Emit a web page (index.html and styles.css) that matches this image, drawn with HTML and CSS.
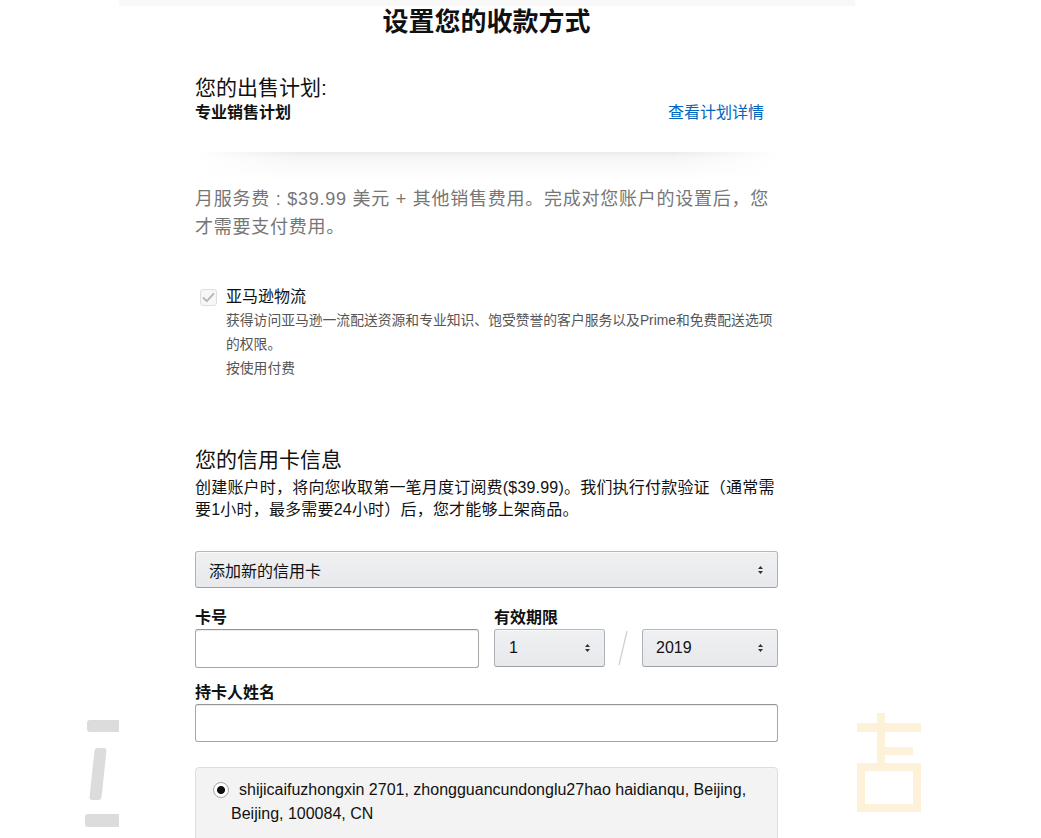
FILE: index.html
```html
<!DOCTYPE html>
<html lang="zh-CN">
<head>
<meta charset="utf-8">
<title>设置您的收款方式</title>
<link rel="stylesheet" href="styles.css">
</head>
<body>
<div class="wm wm-left" aria-hidden="true">
  <span class="wl-top"></span>
  <span class="wl-slant"></span>
  <span class="wl-bottom"></span>
</div>
<div class="wm wm-right" aria-hidden="true">
  <span class="wr-vert"></span>
  <span class="wr-top"></span>
  <span class="wr-mid"></span>
  <span class="wr-box"></span>
</div>
<div class="page">
  <div class="topbar"></div>
  <main class="content">
    <h1 class="title">设置您的收款方式</h1>

    <section class="plan">
      <h2 class="section-title">您的出售计划:</h2>
      <div class="plan-row">
        <span class="plan-name">专业销售计划</span>
        <a class="plan-link" href="#">查看计划详情</a>
      </div>
    </section>

    <div class="divider"></div>

    <p class="fee">月服务费 : $39.99 美元 + 其他销售费用。完成对您账户的设置后，您才需要支付费用。</p>

    <div class="fba">
      <div class="fba-row">
        <span class="checkbox">
          <svg width="13" height="11" viewBox="0 0 13 11"><path d="M1.5 6 L4.8 9.2 L11.5 1.8" fill="none" stroke="#b5b5b5" stroke-width="1.8" stroke-linecap="round" stroke-linejoin="round"/></svg>
        </span>
        <span class="fba-label">亚马逊物流</span>
      </div>
      <p class="fba-desc">获得访问亚马逊一流配送资源和专业知识、饱受赞誉的客户服务以及Prime和免费配送选项的权限。</p>
      <p class="fba-desc">按使用付费</p>
    </div>

    <section class="card">
      <h2 class="section-title">您的信用卡信息</h2>
      <p class="card-desc">创建账户时，将向您收取第一笔月度订阅费($39.99)。我们执行付款验证（通常需要1小时，最多需要24小时）后，您才能够上架商品。</p>

      <div class="select select-full">
        <span>添加新的信用卡</span>
        <svg class="arrows" width="7" height="10" viewBox="0 0 7 10"><path d="M3.5 1 L6 4 L1 4 Z M3.5 9 L6 6 L1 6 Z" fill="#333"/></svg>
      </div>

      <div class="field-row">
        <div class="field field-number">
          <div class="label">卡号</div>
          <div class="input"></div>
        </div>
        <div class="field field-exp">
          <div class="label">有效期限</div>
          <div class="exp-row">
            <div class="select select-month">
              <span>1</span>
              <svg class="arrows" width="7" height="10" viewBox="0 0 7 10"><path d="M3.5 1 L6 4 L1 4 Z M3.5 9 L6 6 L1 6 Z" fill="#333"/></svg>
            </div>
            <svg class="slash" width="37" height="38" viewBox="0 0 37 38"><line x1="22" y1="2" x2="14" y2="36" stroke="#cfcfcf" stroke-width="1.2"/></svg>
            <div class="select select-year">
              <span>2019</span>
              <svg class="arrows" width="7" height="10" viewBox="0 0 7 10"><path d="M3.5 1 L6 4 L1 4 Z M3.5 9 L6 6 L1 6 Z" fill="#333"/></svg>
            </div>
          </div>
        </div>
      </div>

      <div class="field field-name">
        <div class="label">持卡人姓名</div>
        <div class="input"></div>
      </div>

      <div class="address">
        <span class="radio"></span>shijicaifuzhongxin 2701, zhongguancundonglu27hao haidianqu, Beijing, Beijing, 100084, CN
      </div>
    </section>
  </main>
</div>
</body>
</html>
```

FILE: styles.css
```css
html, body {
  margin: 0;
  padding: 0;
  background: #ffffff;
}

body {
  font-family: "Liberation Sans", "Noto Sans CJK SC", Arial, sans-serif;
  color: #111111;
  height: 838px;
  overflow: hidden;
  position: relative;
}

/* watermark remnants behind the page */
.wm {
  position: absolute;
  z-index: 0;
}
.wm span {
  position: absolute;
  display: block;
}
.wm-left span {
  background: #dcdcdc;
  border-radius: 3px;
}
.wm-left .wl-top {
  left: 87px;
  top: 720px;
  width: 40px;
  height: 12px;
}
.wm-left .wl-slant {
  left: 92px;
  top: 748px;
  width: 12px;
  height: 52px;
  transform: skewX(-6deg);
}
.wm-left .wl-bottom {
  left: 85px;
  top: 814px;
  width: 42px;
  height: 13px;
}
.wm-right span {
  background: #fdf1d9;
}
.wm-right .wr-vert {
  left: 877px;
  top: 713px;
  width: 8px;
  height: 52px;
}
.wm-right .wr-top {
  left: 857px;
  top: 723px;
  width: 64px;
  height: 9px;
}
.wm-right .wr-mid {
  left: 885px;
  top: 747px;
  width: 28px;
  height: 8px;
}
.wm-right .wr-box {
  left: 857px;
  top: 763px;
  width: 48px;
  height: 33px;
  background: transparent;
  border: 8px solid #fdf1d9;
}

/* page panel */
.page {
  position: relative;
  z-index: 1;
  width: 736px;
  margin-left: 119px;
  background: #ffffff;
  min-height: 838px;
}

.topbar {
  height: 6px;
  background: #f8f8f8;
}

.content {
  padding: 0 77px 0 76px;
}

.title {
  margin: 0;
  font-size: 26px;
  line-height: 32px;
  font-weight: 700;
  text-align: center;
  color: #111111;
}

.section-title {
  margin: 0;
  font-size: 21px;
  line-height: 26px;
  font-weight: 400;
  color: #111111;
}

.plan {
  margin-top: 37px;
}

.plan-row {
  display: flex;
  justify-content: space-between;
  align-items: center;
  height: 24px;
}

.plan-name {
  font-size: 16px;
  font-weight: 700;
  line-height: 24px;
}

.plan-link {
  font-size: 16px;
  line-height: 24px;
  color: #0066c0;
  text-decoration: none;
  margin-right: 14px;
}

.divider {
  margin-top: 27px;
  height: 28px;
  background: linear-gradient(to bottom, #ebebeb 0px, #f6f6f6 6px, rgba(255,255,255,0) 28px);
  -webkit-mask-image: linear-gradient(to right, transparent 0%, #000 18%, #000 82%, transparent 100%);
  mask-image: linear-gradient(to right, transparent 0%, #000 18%, #000 82%, transparent 100%);
}

.fee {
  margin: 5px 0 0 0;
  font-size: 18px;
  line-height: 28px;
  letter-spacing: 0.75px;
  color: #767676;
}

.fba {
  margin-top: 44px;
}

.fba-row {
  display: flex;
  align-items: center;
  height: 24px;
}

.checkbox {
  box-sizing: border-box;
  width: 17px;
  height: 17px;
  margin-left: 5px;
  margin-right: 9px;
  border: 1px solid #dedede;
  border-radius: 3px;
  background: #f7f7f7;
  display: flex;
  align-items: center;
  justify-content: center;
}

.fba-label {
  font-size: 16px;
  line-height: 24px;
  color: #111111;
}

.fba-desc {
  margin: 0 0 0 31px;
  font-size: 13.8px;
  line-height: 24px;
  color: #555555;
}

.card {
  margin-top: 66px;
}

.card-desc {
  margin: 4px 0 0 0;
  font-size: 16px;
  line-height: 22px;
  letter-spacing: 0.2px;
  color: #111111;
}

.select {
  box-sizing: border-box;
  display: flex;
  align-items: center;
  justify-content: space-between;
  background: linear-gradient(to bottom, #eff0f2, #e7e9ec);
  border: 1px solid #adb1b8;
  border-top-color: #b4b7bd;
  border-bottom-color: #9da1a7;
  border-radius: 3px;
  box-shadow: 0 1px 0 rgba(255,255,255,.6) inset;
  font-size: 16px;
  color: #111111;
}

.select-full {
  margin-top: 30px;
  height: 37px;
  padding: 0 13px 0 13px;
}

.arrows {
  display: block;
  flex: none;
}

.field-row {
  display: flex;
  gap: 15px;
  margin-top: 19px;
}

.label {
  font-size: 16px;
  font-weight: 700;
  line-height: 22px;
  color: #111111;
}

.input {
  box-sizing: border-box;
  border: 1px solid #a6a6a6;
  border-top-color: #949494;
  border-radius: 3px;
  background: #ffffff;
  box-shadow: 0 1px 0 rgba(255,255,255,.5), 0 1px 0 rgba(0,0,0,.07) inset;
}

.field-number {
  width: 284px;
}
.field-number .input {
  height: 39px;
}

.field-exp {
  width: 284px;
}

.exp-row {
  display: flex;
  align-items: center;
}

.select-month {
  width: 111px;
  height: 38px;
  padding: 0 13px 0 14px;
}

.slash {
  display: block;
  flex: none;
}

.select-year {
  width: 136px;
  height: 38px;
  padding: 0 13px 0 13px;
}

.field-name {
  margin-top: 14px;
}
.field-name .input {
  height: 38px;
}

.address {
  box-sizing: border-box;
  margin-top: 25px;
  padding: 10px 20px 20px 35px;
  background: #f3f3f3;
  border: 1px solid #dddddd;
  border-radius: 4px;
  font-size: 16px;
  line-height: 24px;
  color: #111111;
}

.radio {
  box-sizing: border-box;
  display: inline-block;
  width: 16px;
  height: 16px;
  margin-left: -18px;
  margin-right: 10px;
  vertical-align: -3px;
  border: 1px solid #a5a5a5;
  border-radius: 50%;
  background: radial-gradient(circle, #111 0, #111 3.6px, #fff 4.4px);
}
```
